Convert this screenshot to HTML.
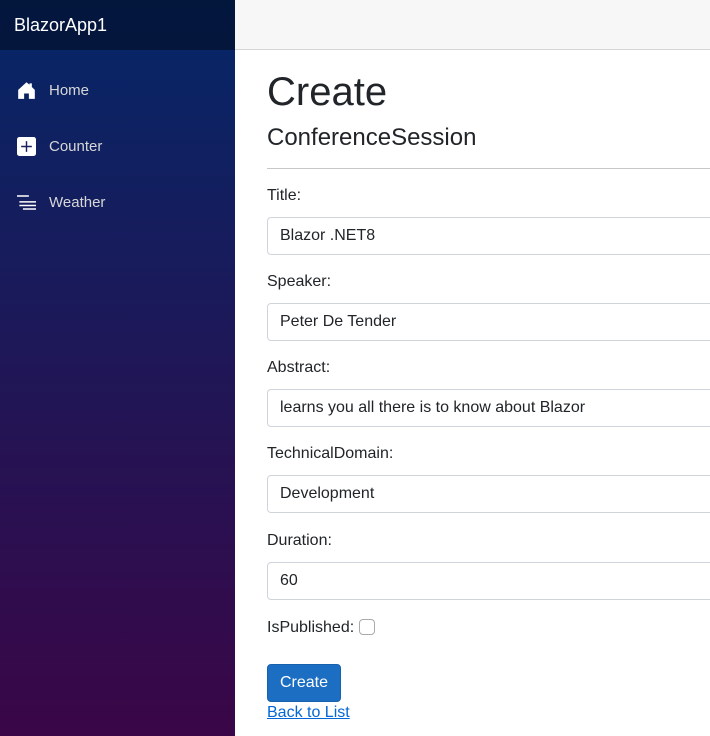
<!DOCTYPE html>
<html><head><style>
*{box-sizing:border-box;margin:0;padding:0}
body{width:710px;height:736px;overflow:hidden;font-family:"Liberation Sans",Arial,sans-serif;color:#212529;background:#fff;position:relative}
.side{position:absolute;left:0;top:0;width:235px;height:736px;background:linear-gradient(180deg,#052767 0%,#3a0647 100%)}
.brand{height:50px;background:rgba(0,0,0,.4);color:#fff;font-size:18px;line-height:50px;padding-left:14px}
.nav{position:absolute;left:17px;color:#d7d7d7;font-size:15px;display:flex;align-items:center}
.nav svg{margin-right:13px}
.top{position:absolute;left:235px;top:0;right:0;height:50px;background:#f7f7f7;border-bottom:1px solid #d6d5d5}
.a{position:absolute;left:267px;white-space:nowrap}
.inp{position:absolute;left:267px;width:460px;height:38px;border:1px solid #ced4da;border-radius:4px;font-size:16px;line-height:36px;padding-left:12px}
.lbl{font-size:16px}
</style></head><body>
<div class="side"><div class="brand">BlazorApp1</div>
<div class="nav" style="top:81px"><svg width="19" height="19" viewBox="0 0 16 16"><path fill="#fff" d="M8 1 1 7.5V15h5v-4.5h4V15h5V7.5L12.5 5V2h-2v1.2z"/></svg>Home</div>
<div class="nav" style="top:137px"><svg width="19" height="19" viewBox="0 0 16 16"><rect width="16" height="16" rx="2" fill="#fff"/><path d="M8 3.5v9M3.5 8h9" stroke="#1a2060" stroke-width="1.2"/></svg>Counter</div>
<div class="nav" style="top:193px"><svg width="19" height="19" viewBox="0 0 16 16"><path d="M0 2.5h10M2 7.5h14M2 10.5h14M5 13.5h11" stroke="#fff" stroke-width="1.3"/></svg>Weather</div>
</div>
<div class="top"></div>
<div class="a" style="top:70px;font-size:40px;line-height:44px">Create</div>
<div class="a" style="top:124px;font-size:24px;line-height:28px">ConferenceSession</div>
<div style="position:absolute;left:267px;right:0;top:168px;border-top:1px solid #c8c8c8"></div>
<div class="a lbl" style="top:187px">Title:</div>
<div class="inp" style="top:217px">Blazor .NET8</div>
<div class="a lbl" style="top:273px">Speaker:</div>
<div class="inp" style="top:303px">Peter De Tender</div>
<div class="a lbl" style="top:359px">Abstract:</div>
<div class="inp" style="top:389px">learns you all there is to know about Blazor</div>
<div class="a lbl" style="top:445px">TechnicalDomain:</div>
<div class="inp" style="top:475px">Development</div>
<div class="a lbl" style="top:532px">Duration:</div>
<div class="inp" style="top:562px">60</div>
<div class="a lbl" style="top:619px">IsPublished: <span style="display:inline-block;width:16px;height:16px;border:1px solid #aaa;border-radius:4px;vertical-align:-3px"></span></div>
<div class="a" style="top:664px;width:74px;height:38px;background:#1b6ec2;border:1px solid #1861ac;border-radius:4px;color:#fff;font-size:16px;line-height:36px;text-align:center">Create</div>
<div class="a" style="top:704px;font-size:16px;color:#0366d6;text-decoration:underline">Back to List</div>
</body></html>
